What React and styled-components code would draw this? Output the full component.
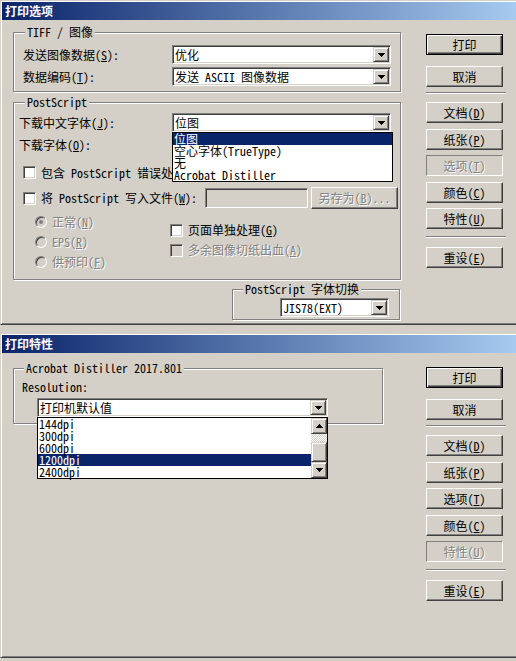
import styled, { createGlobalStyle, css } from 'styled-components';

const FONT = `"Noto Sans Mono CJK SC", "Noto Sans CJK SC", "DejaVu Sans", sans-serif`;

const GlobalStyle = createGlobalStyle`
  html, body {
    margin: 0;
    padding: 0;
    background: #d4d0c8;
  }
  body {
    font-family: ${FONT};
    font-size: 12px;
    line-height: 14px;
    color: #000;
  }
  * { box-sizing: border-box; }
`;

const Page = styled.div`
  width: 516px;
  height: 661px;
  overflow: hidden;
  display: flex;
  flex-direction: column;
  gap: 8px;
`;

const Window = styled.div`
  width: 522px;
  height: 325px;
  flex-shrink: 0;
  background: #d4d0c8;
  border: 1px solid;
  border-color: #d4d0c8 #404040 #404040 #d4d0c8;
  box-shadow: inset 1px 1px #fff, inset -1px -1px #808080;
  padding: 1px;
  display: flex;
  flex-direction: column;
`;

const TitleBar = styled.div`
  height: 18px;
  flex-shrink: 0;
  width: 514px;
  background: linear-gradient(to right, #0a246a, #a6caf0);
  color: #fff;
  font-weight: bold;
  line-height: 18px;
  padding-left: 3px;
`;

const Body = styled.div`
  flex: 1;
  display: flex;
  align-items: flex-start;
  padding-left: 11px;
`;

const MainColumn = styled.div`
  width: 389px;
  display: flex;
  flex-direction: column;
`;

const ButtonColumn = styled.div`
  width: 80px;
  margin-left: 24px;
  padding-top: 14px;
  display: flex;
  flex-direction: column;
`;

const disabledText = css`
  color: #808080;
  text-shadow: 1px 1px 0 #fff;
`;

const Btn = styled.div`
  width: 77px;
  height: 21px;
  margin-top: ${p => p.$mt || 0}px;
  background: #d4d0c8;
  display: flex;
  align-items: center;
  justify-content: center;
  white-space: nowrap;
  border: 1px solid;
  border-color: #fff #404040 #404040 #fff;
  box-shadow: inset -1px -1px #808080;
  ${p => p.$default && css`
    border-color: #000;
    box-shadow: inset 1px 1px #fff, inset -1px -1px #404040, inset -2px -2px #808080;
  `}
  ${p => p.$current && css`
    border-color: #808080 #fff #fff #808080;
    box-shadow: none;
  `}
  ${p => (p.$disabled || p.$current) && disabledText}
`;

const Separator = styled.div`
  width: 80px;
  height: 2px;
  margin-top: ${p => p.$mt}px;
  border-top: 1px solid #808080;
  border-bottom: 1px solid #fff;
`;

const Group = styled.fieldset`
  margin: ${p => p.$mt || 0}px 0 0 ${p => p.$ml || 0}px;
  padding: 0;
  min-width: 0;
  width: ${p => p.$w}px;
  border: 1px solid #808080;
  box-shadow: inset 1px 1px #fff, 1px 1px #fff;
`;

const Legend = styled.legend`
  margin-left: ${p => p.$ml || 11}px;
  padding: 0 2px;
  height: 12px;
  line-height: 12px;
  background: #d4d0c8;
  white-space: nowrap;
`;

const GroupInner = styled.div`
  padding: ${p => p.$pad};
  display: flex;
  flex-direction: column;
`;

const Row = styled.div`
  display: flex;
  align-items: center;
  height: ${p => p.$h || 19}px;
  margin-top: ${p => p.$mt || 0}px;
  padding-left: ${p => p.$pl || 0}px;
  padding-right: ${p => p.$pr || 0}px;
`;

const Label = styled.span`
  flex: ${p => (p.$grow ? 1 : 'none')};
  white-space: nowrap;
  line-height: 12px;
  ${p => p.$disabled && disabledText}
`;

const Key = styled.span`
  text-decoration: underline;
`;

const ComboBox = styled.div`
  position: relative;
  flex-shrink: 0;
  width: ${p => p.$w}px;
  height: 19px;
  margin-left: ${p => p.$ml || 0}px;
  margin-top: ${p => p.$mt || 0}px;
  background: #fff;
  border: 1px solid;
  border-color: #808080 #fff #fff #808080;
  box-shadow: inset 1px 1px #404040, inset -1px -1px #d4d0c8;
  padding: 1px;
  display: flex;
  align-items: center;
`;

const ComboValue = styled.span`
  flex: 1;
  padding-left: 1px;
  white-space: nowrap;
  line-height: 14px;
`;

const ArrowBtn = styled.span`
  width: 16px;
  height: ${p => p.$h || 15}px;
  flex-shrink: 0;
  background: #d4d0c8;
  border: 1px solid;
  border-color: #d4d0c8 #404040 #404040 #d4d0c8;
  box-shadow: inset 1px 1px #fff, inset -1px -1px #808080;
  display: flex;
  align-items: center;
  justify-content: center;
`;

const DropList = styled.div`
  position: absolute;
  left: -1px;
  top: calc(100% + 1px);
  width: ${p => p.$w}px;
  background: #fff;
  border: 1px solid #000;
  z-index: 5;
  display: flex;
`;

const Items = styled.ul`
  flex: 1;
  margin: 0;
  padding: 0;
  list-style: none;
`;

const Item = styled.li`
  height: 12px;
  line-height: 12px;
  padding-left: 1px;
  white-space: nowrap;
  background: ${p => (p.$selected ? '#0a246a' : 'transparent')};
  color: ${p => (p.$selected ? '#fff' : '#000')};
`;

const ScrollBar = styled.div`
  width: 16px;
  display: flex;
  flex-direction: column;
`;

const Track = styled.div`
  height: ${p => p.$h}px;
  background: repeating-conic-gradient(#fff 0 25%, #d4d0c8 0 50%) 0 0 / 2px 2px;
`;

const Thumb = styled.div`
  height: 20px;
  background: #d4d0c8;
  border: 1px solid;
  border-color: #d4d0c8 #404040 #404040 #d4d0c8;
  box-shadow: inset 1px 1px #fff, inset -1px -1px #808080;
`;

const CheckBox = styled.span`
  width: 13px;
  height: 13px;
  flex-shrink: 0;
  margin-right: 5px;
  background: ${p => (p.$disabled ? '#d4d0c8' : '#fff')};
  border: 1px solid;
  border-color: #808080 #fff #fff #808080;
  box-shadow: inset 1px 1px #404040, inset -1px -1px #d4d0c8;
`;

const Radio = styled.span`
  width: 12px;
  height: 12px;
  flex-shrink: 0;
  margin-right: 5px;
  border-radius: 50%;
  background: #d4d0c8;
  border: 1px solid;
  border-color: #808080 #fff #fff #808080;
  box-shadow: inset 1px 1px #404040;
  display: flex;
  align-items: center;
  justify-content: center;

  &::after {
    content: '';
    display: ${p => (p.$checked ? 'block' : 'none')};
    width: 4px;
    height: 4px;
    border-radius: 50%;
    background: #808080;
  }
`;

const TextField = styled.span`
  width: 103px;
  height: 20px;
  flex-shrink: 0;
  background: #d4d0c8;
  border: 1px solid;
  border-color: #808080 #fff #fff #808080;
  box-shadow: inset 1px 1px #404040, inset -1px -1px #d4d0c8;
`;

const FileButton = styled(Btn)`
  width: 87px;
  height: 22px;
  margin-left: 3px;
`;

const Options = styled.div`
  display: grid;
  grid-template-columns: 135px 1fr;
  margin-top: 3px;
  padding-left: 16px;
`;

const OptionCol = styled.div`
  display: flex;
  flex-direction: column;
  padding-top: ${p => p.$pt || 0}px;
`;

const Arrow = ({ up }) => (
  <svg width="7" height="4" viewBox="0 0 7 4" shapeRendering="crispEdges">
    <path
      fill="#000"
      d={up
        ? 'M3 0h1v1H3z M2 1h3v1H2z M1 2h5v1H1z M0 3h7v1H0z'
        : 'M0 0h7v1H0z M1 1h5v1H1z M2 2h3v1H2z M3 3h1v1H3z'}
    />
  </svg>
);

const Combo = ({ w, value, ml, mt, children }) => (
  <ComboBox $w={w} $ml={ml} $mt={mt}>
    <ComboValue>{value}</ComboValue>
    <ArrowBtn><Arrow /></ArrowBtn>
    {children}
  </ComboBox>
);

const Mn = ({ text, k, after = '' }) => (
  <>
    {text}(<Key>{k}</Key>){after}
  </>
);

function Buttons({ current }) {
  const b = (label, k, mt, key) => (
    <Btn $mt={mt} $current={current === key}>
      <Mn text={label} k={k} />
    </Btn>
  );
  return (
    <ButtonColumn>
      <Btn $default>打印</Btn>
      <Btn $mt={11}>取消</Btn>
      <Separator $mt={5} />
      {b('文档', 'D', 8, 'doc')}
      {b('纸张', 'P', 6, 'paper')}
      {b('选项', 'T', 5, 'options')}
      {b('颜色', 'C', 6, 'color')}
      {b('特性', 'U', 5, 'features')}
      <Separator $mt={7} />
      <Btn $mt={9}><Mn text="重设" k="E" /></Btn>
    </ButtonColumn>
  );
}

function OptionsDialog() {
  return (
    <Window>
      <TitleBar>打印选项</TitleBar>
      <Body>
        <MainColumn>
          <Group $w={388} $mt={6}>
            <Legend>TIFF / 图像</Legend>
            <GroupInner $pad="7px 9px 5px 9px">
              <Row>
                <Label $grow><Mn text="发送图像数据" k="S" after=":" /></Label>
                <Combo w={219} value="优化" />
              </Row>
              <Row $mt={3}>
                <Label $grow><Mn text="数据编码" k="T" after=":" /></Label>
                <Combo w={219} value="发送 ASCII 图像数据" />
              </Row>
            </GroupInner>
          </Group>

          <Group $w={388} $mt={4}>
            <Legend>PostScript</Legend>
            <GroupInner $pad="5px 2px 7px 5px">
              <Row $pr={7}>
                <Label $grow><Mn text="下载中文字体" k="J" after=":" /></Label>
                <Combo w={219} value="位图">
                  <DropList $w={221}>
                    <Items>
                      <Item $selected>位图</Item>
                      <Item>空心字体(TrueType)</Item>
                      <Item>无</Item>
                      <Item>Acrobat Distiller</Item>
                    </Items>
                  </DropList>
                </Combo>
              </Row>
              <Row $mt={3} $pr={7}>
                <Label $grow><Mn text="下载字体" k="O" after=":" /></Label>
                <Combo w={219} value="" />
              </Row>
              <Row $h={13} $mt={12} $pl={4}>
                <CheckBox />
                <Label>包含 PostScript 错误处理程序<Mn text="" k="E" /></Label>
              </Row>
              <Row $h={22} $mt={8} $pl={4}>
                <CheckBox />
                <Label $grow>将 PostScript 写入文件<Mn text="" k="W" after=":" /></Label>
                <TextField />
                <FileButton $disabled><Mn text="另存为" k="B" after="..." /></FileButton>
              </Row>
              <Options>
                <OptionCol>
                  <Row $h={20}>
                    <Radio $checked />
                    <Label $disabled><Mn text="正常" k="N" /></Label>
                  </Row>
                  <Row $h={20}>
                    <Radio />
                    <Label $disabled><Mn text="EPS" k="R" /></Label>
                  </Row>
                  <Row $h={20}>
                    <Radio />
                    <Label $disabled><Mn text="供预印" k="F" /></Label>
                  </Row>
                </OptionCol>
                <OptionCol $pt={8}>
                  <Row $h={20}>
                    <CheckBox />
                    <Label><Mn text="页面单独处理" k="G" /></Label>
                  </Row>
                  <Row $h={20}>
                    <CheckBox $disabled />
                    <Label $disabled><Mn text="多余图像切纸出血" k="A" /></Label>
                  </Row>
                </OptionCol>
              </Options>
            </GroupInner>
          </Group>

          <Group $w={168} $mt={3} $ml={219}>
            <Legend $ml={10}>PostScript 字体切换</Legend>
            <GroupInner $pad="3px 0 2px 47px">
              <Combo w={109} value="JIS78(EXT)" />
            </GroupInner>
          </Group>
        </MainColumn>
        <Buttons current="options" />
      </Body>
    </Window>
  );
}

function FeaturesDialog() {
  return (
    <Window>
      <TitleBar>打印特性</TitleBar>
      <Body>
        <MainColumn>
          <Group $w={370} $mt={9}>
            <Legend $ml={10}>Acrobat Distiller 2017.801</Legend>
            <GroupInner $pad="7px 0 6px 8px">
              <Label>Resolution:</Label>
              <Combo w={291} ml={15} mt={5} value="打印机默认值">
                <DropList $w={291}>
                  <Items>
                    <Item>144dpi</Item>
                    <Item>300dpi</Item>
                    <Item>600dpi</Item>
                    <Item $selected>1200dpi</Item>
                    <Item>2400dpi</Item>
                  </Items>
                  <ScrollBar>
                    <ArrowBtn $h={16}><Arrow up /></ArrowBtn>
                    <Track $h={8} />
                    <Thumb />
                    <ArrowBtn $h={16}><Arrow /></ArrowBtn>
                  </ScrollBar>
                </DropList>
              </Combo>
            </GroupInner>
          </Group>
        </MainColumn>
        <Buttons current="features" />
      </Body>
    </Window>
  );
}

export default function App() {
  return (
    <>
      <GlobalStyle />
      <Page>
        <OptionsDialog />
        <FeaturesDialog />
      </Page>
    </>
  );
}
